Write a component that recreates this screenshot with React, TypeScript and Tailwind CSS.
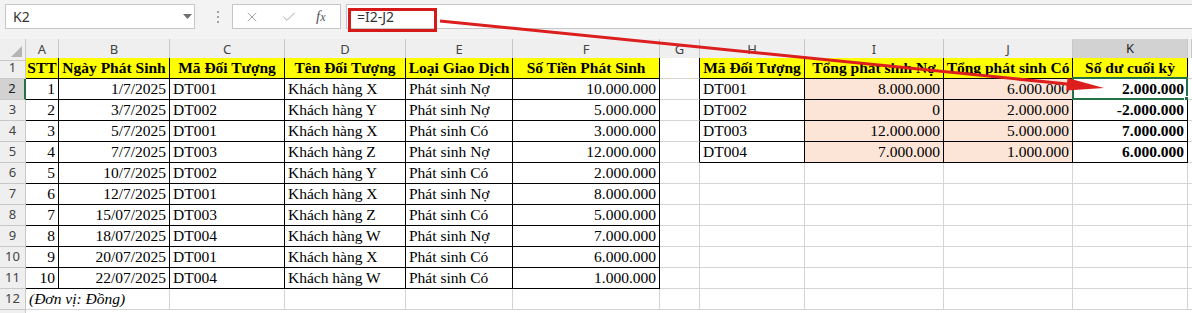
import { Fragment } from 'react'
import { Check, X } from 'lucide-react'

type Cell = {
  t?: string
  a?: 'l' | 'r' | 'c'
  b?: boolean
  i?: boolean
  bg?: 'yellow' | 'pink'
  span?: number
  skip?: boolean
  sel?: boolean
}

const LETTERS = ['A', 'B', 'C', 'D', 'E', 'F', 'G', 'H', 'I', 'J', 'K', '']

const GRID =
  'grid grid-cols-[26px_33px_111px_115px_121px_107px_147px_40px_105px_139px_129px_115px_4px]'

const t1Head = ['STT', 'Ngày Phát Sinh', 'Mã Đối Tượng', 'Tên Đối Tượng', 'Loại Giao Dịch', 'Số Tiền Phát Sinh']
const t1 = [
  ['1', '1/7/2025', 'DT001', 'Khách hàng X', 'Phát sinh Nợ', '10.000.000'],
  ['2', '3/7/2025', 'DT002', 'Khách hàng Y', 'Phát sinh Nợ', '5.000.000'],
  ['3', '5/7/2025', 'DT001', 'Khách hàng X', 'Phát sinh Có', '3.000.000'],
  ['4', '7/7/2025', 'DT003', 'Khách hàng Z', 'Phát sinh Nợ', '12.000.000'],
  ['5', '10/7/2025', 'DT002', 'Khách hàng Y', 'Phát sinh Có', '2.000.000'],
  ['6', '12/7/2025', 'DT001', 'Khách hàng X', 'Phát sinh Nợ', '8.000.000'],
  ['7', '15/07/2025', 'DT003', 'Khách hàng Z', 'Phát sinh Có', '5.000.000'],
  ['8', '18/07/2025', 'DT004', 'Khách hàng W', 'Phát sinh Nợ', '7.000.000'],
  ['9', '20/07/2025', 'DT001', 'Khách hàng X', 'Phát sinh Có', '6.000.000'],
  ['10', '22/07/2025', 'DT004', 'Khách hàng W', 'Phát sinh Có', '1.000.000'],
]
const t1Align: ('l' | 'r')[] = ['r', 'r', 'l', 'l', 'l', 'r']

const t2Head = ['Mã Đối Tượng', 'Tổng phát sinh Nợ', 'Tổng phát sinh Có', 'Số dư cuối kỳ']
const t2 = [
  ['DT001', '8.000.000', '6.000.000', '2.000.000'],
  ['DT002', '0', '2.000.000', '-2.000.000'],
  ['DT003', '12.000.000', '5.000.000', '7.000.000'],
  ['DT004', '7.000.000', '1.000.000', '6.000.000'],
]

function inT(r: number, c: number) {
  return (c >= 0 && c <= 5 && r >= 0 && r <= 10) || (c >= 7 && c <= 10 && r >= 0 && r <= 4)
}

function buildRows(): Cell[][] {
  const rows: Cell[][] = []
  for (let r = 0; r < 12; r++) {
    const row: Cell[] = []
    for (let c = 0; c < 12; c++) row.push({})
    rows.push(row)
  }
  t1Head.forEach((h, c) => (rows[0][c] = { t: h, a: 'c', b: true, bg: 'yellow' }))
  t2Head.forEach((h, c) => (rows[0][c + 7] = { t: h, a: 'c', b: true, bg: 'yellow' }))
  t1.forEach((line, r) => line.forEach((v, c) => (rows[r + 1][c] = { t: v, a: t1Align[c] })))
  t2.forEach((line, r) => {
    rows[r + 1][7] = { t: line[0], a: 'l' }
    rows[r + 1][8] = { t: line[1], a: 'r', bg: 'pink' }
    rows[r + 1][9] = { t: line[2], a: 'r', bg: 'pink' }
    rows[r + 1][10] = { t: line[3], a: 'r', b: true, sel: r === 0 }
  })
  rows[11][0] = { t: '(Đơn vị: Đồng)', a: 'l', i: true, span: 2 }
  rows[11][1] = { skip: true }
  return rows
}

function SheetCell({ cell, r, c }: { cell: Cell; r: number; c: number }) {
  const last = c + (cell.span ?? 1) - 1
  const rightBlack = inT(r, last) || inT(r, last + 1)
  const bottomBlack = inT(r, c) || inT(r + 1, c)
  return (
    <div
      className={[
        'relative flex h-[21px] items-end whitespace-nowrap border-r border-b px-[3px] pb-[1px] leading-[18px]',
        cell.span === 2 ? 'col-span-2' : '',
        rightBlack ? 'border-r-black' : 'border-r-[#d4d4d4]',
        bottomBlack ? 'border-b-black' : 'border-b-[#d4d4d4]',
        cell.bg === 'yellow' ? 'bg-[#ffff00]' : cell.bg === 'pink' ? 'bg-[#fce4d6]' : 'bg-white',
        cell.a === 'r' ? 'justify-end' : cell.a === 'c' ? 'justify-center overflow-hidden' : 'justify-start',
        cell.b ? 'font-bold' : '',
        cell.i ? 'italic' : '',
      ].join(' ')}
    >
      {cell.t}
      {cell.sel && (
        <div className="absolute -top-[2px] -left-[1px] -right-[1px] -bottom-[1px] border-2 border-[#217346]">
          <div className="absolute -right-[4px] -bottom-[4px] h-[6px] w-[6px] border border-white bg-[#217346]" />
        </div>
      )}
    </div>
  )
}

function Toolbar() {
  return (
    <div className="flex h-[39px] items-start bg-[#f3f3f3] pt-[4px] pl-[5px] font-['Noto_Sans',sans-serif] text-[14px] text-[#333]">
      <div className="flex h-[25px] w-[190px] items-center justify-between border border-[#c6c6c6] bg-white pl-[7px] pr-[2px]">
        <span>K2</span>
        <svg width="9" height="6" viewBox="0 0 9 6">
          <polygon points="0,0 9,0 4.5,5" fill="#6f6f6f" />
        </svg>
      </div>
      <div className="ml-[22px] flex h-[25px] flex-col items-center justify-center gap-[3px]">
        <span className="h-[2px] w-[2px] bg-[#a0a0a0]" />
        <span className="h-[2px] w-[2px] bg-[#a0a0a0]" />
        <span className="h-[2px] w-[2px] bg-[#a0a0a0]" />
      </div>
      <div className="ml-[13px] flex h-[25px] w-[109px] items-center border border-[#c6c6c6] bg-white pl-[11px]">
        <X size={16} strokeWidth={1.5} className="text-[#a6a6a6]" />
        <Check size={16} strokeWidth={1.5} className="ml-[21px] text-[#a6a6a6]" />
        <span className="ml-[19px] font-['Liberation_Serif',serif] text-[15px] italic text-[#555]">
          f<span className="text-[12px]">x</span>
        </span>
      </div>
      <div className="ml-[5px] flex h-[25px] flex-1 items-center border-y border-l border-[#c6c6c6] bg-white pl-[10px]">
        =I2-J2
      </div>
    </div>
  )
}

function ColumnHeaders() {
  return (
    <div className={`${GRID} h-[19px] bg-[#efefef] font-['Noto_Sans',sans-serif] text-[13px] text-[#444]`}>
      <div className="relative border-r border-b border-[#c8c8c8]">
        <svg className="absolute right-[3px] bottom-[3px]" width="11" height="11" viewBox="0 0 11 11">
          <polygon points="11,0 11,11 0,11" fill="#b4b4b4" />
        </svg>
      </div>
      {LETTERS.map((l, i) =>
        l === 'K' ? (
          <div
            key={i}
            className="flex items-center justify-center border-r border-r-[#c8c8c8] border-b-2 border-b-[#217346] bg-[#d2d2d2] text-[#222]"
          >
            {l}
          </div>
        ) : (
          <div key={i} className="flex items-center justify-center border-r border-b border-[#c8c8c8]">
            {l}
          </div>
        ),
      )}
    </div>
  )
}

export default function App() {
  const rows = buildRows()
  return (
    <div className="relative h-[313px] w-[1192px] overflow-hidden bg-white">
      <Toolbar />
      <ColumnHeaders />
      <div className={`${GRID} font-['Liberation_Serif',serif] text-[15.5px] text-black`}>
        {rows.map((row, r) => (
          <Fragment key={r}>
            <div
              className={
                r === 1
                  ? "flex h-[21px] items-center justify-center border-r-2 border-b border-r-[#217346] border-b-[#c8c8c8] bg-[#d2d2d2] font-['Noto_Sans',sans-serif] text-[13px] text-[#222]"
                  : "flex h-[21px] items-center justify-center border-r border-b border-[#c8c8c8] bg-[#efefef] font-['Noto_Sans',sans-serif] text-[13px] text-[#444]"
              }
            >
              {r + 1}
            </div>
            {row.map((cell, c) => (cell.skip ? null : <SheetCell key={c} cell={cell} r={r} c={c} />))}
          </Fragment>
        ))}
        <div className="h-[21px] border-r border-[#c8c8c8] bg-[#efefef]" />
      </div>

      {/* red arrow from the formula to K2 */}
      <svg className="pointer-events-none absolute top-0 left-0" width="1192" height="313" viewBox="0 0 1192 313">
        <line x1="440" y1="21" x2="1072" y2="84.5" stroke="#dc1e1e" strokeWidth="3" />
        <polygon points="1104,88 1067.5,78 1066.3,90.5" fill="#dc1e1e" />
      </svg>
      {/* red box around formula */}
      <div className="pointer-events-none absolute top-[8px] left-[348px] h-[24px] w-[89px] border-[3px] border-[#d61a1a]" />
    </div>
  )
}
